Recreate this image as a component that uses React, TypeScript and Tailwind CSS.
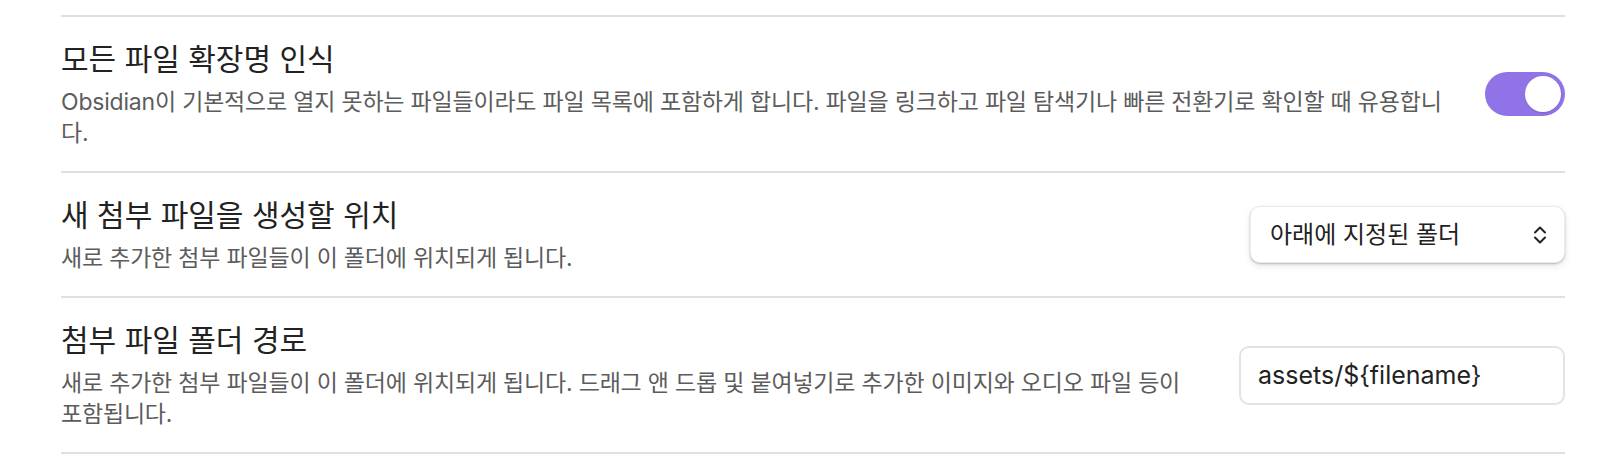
import React, { useState } from 'react';

const font = 'font-["Inter","Noto_Sans_CJK_KR",sans-serif]';

const SettingItem = ({
    name,
    desc,
    infoClass,
    children,
}: {
    name: string;
    desc: string;
    infoClass?: string;
    children: React.ReactNode;
}) => (
    <div className="flex items-center border-t-2 border-[#e0e0e0] py-[22px]">
        <div className={`flex-1 min-w-0 ${infoClass ?? ''}`}>
            <div className="text-[30px] leading-[40px] text-[#222222]">{name}</div>
            <div className="mt-[8px] text-[23px] leading-[31px] tracking-[-0.2px] text-[#5c5c5c]">{desc}</div>
        </div>
        <div className="flex shrink-0 justify-end">{children}</div>
    </div>
);

const Toggle = () => {
    const [on, setOn] = useState(true);
    return (
        <button
            className={`flex h-[44px] w-[80px] items-center rounded-full p-[4px] ${
                on ? 'justify-end bg-[#9173e8]' : 'justify-start bg-[#d0d0d0]'
            }`}
            onClick={() => setOn(!on)}
        >
            <span className="block h-[36px] w-[36px] rounded-full bg-white shadow-[0_1px_2px_rgba(0,0,0,0.15)]" />
        </button>
    );
};

const Dropdown = () => (
    <div className="flex h-[57px] w-[315px] items-center justify-between rounded-[10px] border border-[#ebebeb] bg-white pl-[19px] pr-[16px] shadow-[0_1px_2px_rgba(0,0,0,0.22),0_3px_7px_rgba(0,0,0,0.1)]">
        <span className="text-[24px] text-[#222222]">아래에 지정된 폴더</span>
        <svg width="16" height="20" viewBox="0 0 16 20" fill="none" stroke="#222222" strokeWidth="2" strokeLinecap="round" strokeLinejoin="round">
            <path d="M3 7.5 L8 2.5 L13 7.5" />
            <path d="M3 12.5 L8 17.5 L13 12.5" />
        </svg>
    </div>
);

export default function App() {
    const [path, setPath] = useState('assets/${filename}');

    return (
        <div className={`min-h-[468px] bg-white pl-[61px] pr-[47px] pt-[15px] ${font}`}>
            <SettingItem
                name="모든 파일 확장명 인식"
                desc="Obsidian이 기본적으로 열지 못하는 파일들이라도 파일 목록에 포함하게 합니다. 파일을 링크하고 파일 탐색기나 빠른 전환기로 확인할 때 유용합니다."
                infoClass="mr-[42px]"
            >
                <Toggle />
            </SettingItem>
            <SettingItem
                name="새 첨부 파일을 생성할 위치"
                desc="새로 추가한 첨부 파일들이 이 폴더에 위치되게 됩니다."
                infoClass="mr-[32px]"
            >
                <Dropdown />
            </SettingItem>
            <SettingItem
                name="첨부 파일 폴더 경로"
                desc="새로 추가한 첨부 파일들이 이 폴더에 위치되게 됩니다. 드래그 앤 드롭 및 붙여넣기로 추가한 이미지와 오디오 파일 등이 포함됩니다."
                infoClass="mr-[32px]"
            >
                <input
                    type="text"
                    className="h-[59px] w-[326px] rounded-[10px] border-2 border-[#e3e3e3] bg-white px-[17px] text-[25px] text-[#222222] focus:outline-none"
                    value={path}
                    onChange={(e) => setPath(e.target.value)}
                />
            </SettingItem>
            <div className="border-t-2 border-[#e0e0e0]" />
        </div>
    );
}
